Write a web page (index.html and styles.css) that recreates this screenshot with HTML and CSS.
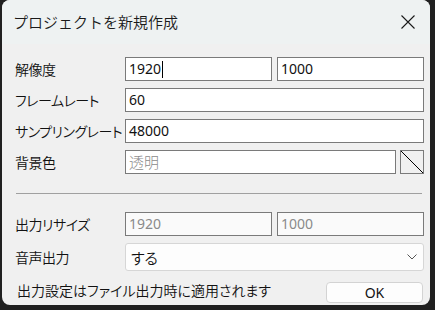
FILE: index.html
```html
<!DOCTYPE html>
<html lang="ja">
<head>
<meta charset="utf-8">
<link rel="stylesheet" href="styles.css">
</head>
<body>
<div class="window">
  <div class="titlebar">
    <span class="title">プロジェクトを新規作成</span>
    <svg class="close" width="14" height="14" viewBox="0 0 14 14"><path d="M0.5 0.5 L13.5 13.5 M13.5 0.5 L0.5 13.5" stroke="#1a1a1a" stroke-width="1.1" fill="none"/></svg>
  </div>
  <div class="content">
    <div class="form">
      <div class="label">解像度</div>
      <div class="pair">
        <div class="field">1920<span class="caret"></span></div>
        <div class="field">1000</div>
      </div>
      <div class="label">フレームレート</div>
      <div class="field">60</div>
      <div class="label">サンプリングレート</div>
      <div class="field">48000</div>
      <div class="label">背景色</div>
      <div class="colorrow">
        <div class="field muted">透明</div>
        <div class="swatch"><svg width="24" height="24" viewBox="0 0 24 24"><path d="M1 1 L23 23" stroke="#000" stroke-width="1"/></svg></div>
      </div>
    </div>
    <div class="sep"></div>
    <div class="form">
      <div class="label">出力リサイズ</div>
      <div class="pair">
        <div class="field disabled">1920</div>
        <div class="field disabled">1000</div>
      </div>
      <div class="label">音声出力</div>
      <div class="combo">
        <span>する</span>
        <svg width="10" height="6" viewBox="0 0 10 6"><path d="M0.5 0.5 L5 5 L9.5 0.5" stroke="#555" stroke-width="1" fill="none"/></svg>
      </div>
    </div>
    <div class="footer">
      <span class="note">出力設定はファイル出力時に適用されます</span>
      <button class="ok">OK</button>
    </div>
  </div>
</div>
</body>
</html>
```
FILE: styles.css
```css
* { box-sizing: border-box; }
html, body { margin: 0; padding: 0; }
body {
  background: #202020;
  width: 435px;
  height: 310px;
  padding-left: 2px;
  font-family: "Noto Sans CJK JP", "Noto Sans", sans-serif;
  font-feature-settings: "palt";
  color: #111;
  overflow: hidden;
}
.window {
  width: 428px;
  height: 305px;
  background: #f0f0f0;
  border-radius: 8px;
  overflow: hidden;
}
.titlebar {
  height: 44px;
  background: #eef2f2;
  display: flex;
  align-items: center;
  justify-content: space-between;
  padding: 0 15px 0 11px;
}
.title {
  font-size: 15px;
  font-feature-settings: normal;
  font-weight: 350;
  color: #1a1a1a;
  margin-top: -2px;
}
.close { margin-top: 0px; }
.content {
  padding: 13px 6px 0 13px;
}
.form {
  display: grid;
  grid-template-columns: 110px 299px;
  row-gap: 7px;
  align-items: center;
}
.label {
  font-size: 14px;
  font-weight: 350;
  letter-spacing: -0.5px;
  line-height: 20px;
  white-space: nowrap;
}
.field {
  height: 24px;
  border: 1px solid #7a7a7a;
  background: #fff;
  font-size: 14px;
  line-height: 22px;
  padding-left: 3px;
  display: flex;
  align-items: center;
  font-family: "Noto Sans", "Noto Sans CJK JP", sans-serif;
}
.field.muted { color: #8a8a8a; font-family: "Noto Sans CJK JP", sans-serif; font-size: 15px; font-weight: 300; }
.field.disabled { color: #8a8a8a; background: #fafafa; }
.caret {
  display: inline-block;
  width: 1px;
  height: 17px;
  background: #000;
  margin-left: 1px;
}
.pair {
  display: grid;
  grid-template-columns: 147px 147px;
  column-gap: 5px;
}
.colorrow {
  display: flex;
  gap: 4px;
}
.colorrow .field { flex: 1; }
.swatch {
  width: 24px;
  height: 24px;
  border: 1px solid #7a7a7a;
  background: #f0f0f0;
  position: relative;
  overflow: hidden;
}
.swatch svg { position: absolute; left: -1px; top: -1px; }
.sep {
  height: 1px;
  background: #a0a0a0;
  margin: 19px 2px 18px 1px;
}
.combo {
  height: 28px;
  border: 1px solid #d6d6d6;
  border-radius: 3px;
  background: #fdfdfd;
  display: flex;
  align-items: center;
  justify-content: space-between;
  padding: 0 5px 0 5px;
  font-size: 15px;
  font-weight: 350;
}
.combo svg { margin-right: 1px; }
.footer {
  display: flex;
  justify-content: space-between;
  align-items: center;
  margin-top: 11px;
}
.note {
  font-size: 14px;
  font-weight: 350;
  margin-left: 2px;
  margin-top: -6px;
}
.ok {
  width: 97px;
  height: 21px;
  border: 1px solid #d3d3d3;
  border-radius: 4px;
  background: #fdfdfd;
  font-family: "Noto Sans", sans-serif;
  font-size: 14px;
  color: #111;
  padding: 0;
  margin-right: 1px;
  line-height: 19px;
}
```
